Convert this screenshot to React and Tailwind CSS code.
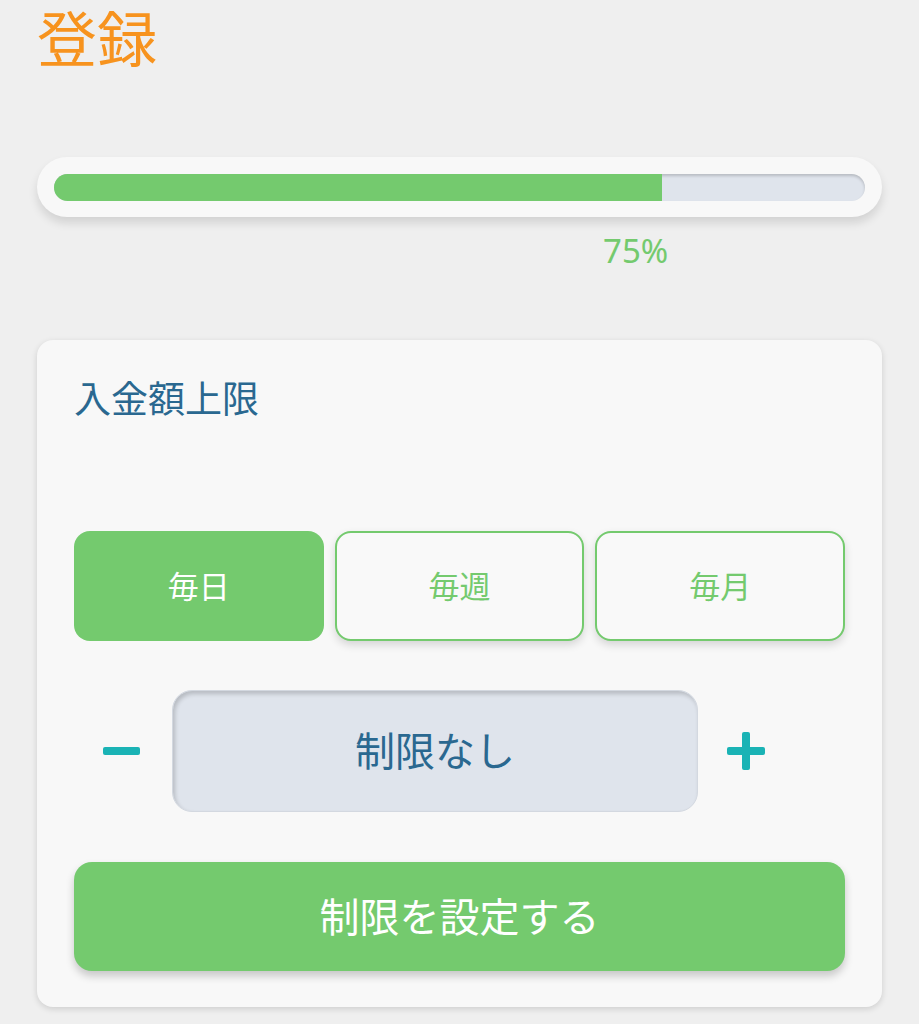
import React, { useState } from "react";

const tabs = ["毎日", "毎週", "毎月"];

export default function App() {
  const [active, setActive] = useState(0);
  const progress = 75;

  return (
    <div
      className="min-h-screen bg-[#efefef] px-[37px] pb-4"
      style={{ fontFamily: '"Noto Sans", "Noto Sans CJK JP", sans-serif' }}
    >
      {/* タイトル */}
      <h1 className="pt-[1px] text-[60px] leading-[77px] font-normal text-[#f7931e]">登録</h1>

      {/* 進捗バー */}
      <div className="mt-[79px] flex h-[60px] items-center rounded-full bg-[#f8f8f8] px-[17px] shadow-[0_6px_10px_rgba(0,0,0,0.12)]">
        <div className="h-[27px] w-full overflow-hidden rounded-full bg-[#dfe4ec] shadow-[inset_0_2px_3px_rgba(0,0,0,0.18)]">
          <div className="h-full bg-[#74ca6e]" style={{ width: `${progress}%` }} />
        </div>
      </div>
      <div className="mt-[12px] pl-[566px] text-[33px] leading-[44px] text-[#74ca6e]">{progress}%</div>

      {/* カード */}
      <div className="mt-[67px] h-[667px] rounded-[16px] bg-[#f8f8f8] px-[37px] pt-[33px] shadow-[0_2px_6px_rgba(0,0,0,0.14)]">
        <div className="text-[37px] leading-[52px] text-[#2a6890]">入金額上限</div>

        <div className="mt-[106px] grid grid-cols-3 gap-[11px]">
          {tabs.map((t, i) => (
            <button
              key={t}
              onClick={() => setActive(i)}
              className={
                i === active
                  ? "h-[110px] rounded-[16px] bg-[#74ca6e] text-[31px] text-white"
                  : "h-[110px] rounded-[16px] border-2 border-[#74ca6e] bg-[#f9f9f9] text-[31px] text-[#74ca6e] shadow-[0_4px_8px_rgba(0,0,0,0.14)]"
              }
            >
              {t}
            </button>
          ))}
        </div>

        <div className="mt-[49px] flex items-center">
          <button className="flex w-[98px] justify-start pl-[29px]">
            <span className="block h-[8px] w-[37px] rounded-[2px] bg-[#1ab3b5]" />
          </button>
          <div className="flex h-[122px] w-[526px] items-center justify-center rounded-[20px] border border-[#d3d8e0] bg-[#dfe4ec] text-[40px] text-[#2a6890] shadow-[inset_2px_3px_4px_rgba(0,0,0,0.18)]">
            制限なし
          </div>
          <button className="relative ml-[29px] h-[38px] w-[38px]">
            <span className="absolute left-0 top-[15px] h-[8px] w-[38px] rounded-[2px] bg-[#1ab3b5]" />
            <span className="absolute left-[15px] top-0 h-[38px] w-[8px] rounded-[2px] bg-[#1ab3b5]" />
          </button>
        </div>

        <button className="mt-[50px] h-[109px] w-full rounded-[18px] bg-[#74ca6e] text-[40px] text-white shadow-[0_5px_8px_rgba(0,0,0,0.2)]">
          制限を設定する
        </button>
      </div>
    </div>
  );
}
